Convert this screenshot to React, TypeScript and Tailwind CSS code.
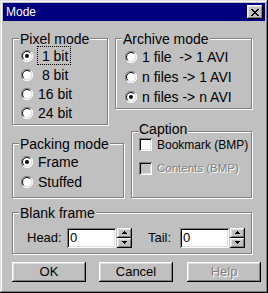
import type { ReactNode } from 'react';

const raised =
  'shadow-[inset_-1px_-1px_0_#000,inset_1px_1px_0_#fff,inset_-2px_-2px_0_#808080,inset_2px_2px_0_#dfdfdf]';
const sunken =
  'shadow-[inset_1px_1px_0_#808080,inset_-1px_-1px_0_#fff,inset_2px_2px_0_#000,inset_-2px_-2px_0_#dfdfdf]';
const disabledText = 'text-[#808080] [text-shadow:1px_1px_0_#fff]';

function Group({
  label,
  className,
  top = 'top-[-7px]',
  children,
}: {
  label: string;
  className: string;
  top?: string;
  children?: ReactNode;
}) {
  return (
    <div className={`relative border border-[#808080] shadow-[inset_1px_1px_0_#fff,1px_1px_0_#fff] ${className}`}>
      <span className={`absolute left-[6px] ${top} bg-[#c0c0c0] px-px text-[14px] leading-[14px] whitespace-pre`}>
        {label}
      </span>
      {children}
    </div>
  );
}

function Radio({ checked }: { checked?: boolean }) {
  return (
    <svg width="12" height="12" viewBox="0 0 12 12" className="shrink-0">
      <circle cx="6" cy="6" r="5" fill="#fff" />
      <path d="M1.9 10.1 A5.5 5.5 0 0 1 10.1 1.9" fill="none" stroke="#808080" />
      <path d="M10.1 1.9 A5.5 5.5 0 0 1 1.9 10.1" fill="none" stroke="#fff" />
      <path d="M2.8 9.2 A4.5 4.5 0 0 1 9.2 2.8" fill="none" stroke="#000" />
      <path d="M9.2 2.8 A4.5 4.5 0 0 1 2.8 9.2" fill="none" stroke="#dfdfdf" />
      {checked && <circle cx="6" cy="6" r="2" fill="#000" />}
    </svg>
  );
}

function RadioRow({ label, checked, focus, h = 'h-[19px]' }: { label: string; checked?: boolean; focus?: boolean; h?: string }) {
  return (
    <div className={`flex items-center ${h}`}>
      <Radio checked={checked} />
      <span
        className={`ml-[4px] flex h-[19px] items-center border pr-[2px] text-[14px] leading-none whitespace-pre ${
          focus ? 'border-dotted border-black' : 'border-transparent'
        }`}
      >
        {label}
      </span>
    </div>
  );
}

function Check({ label, disabled }: { label: string; disabled?: boolean }) {
  return (
    <div className="flex h-[13px] items-center">
      <span className={`h-[13px] w-[13px] shrink-0 ${sunken} ${disabled ? 'bg-[#c0c0c0]' : 'bg-white'}`} />
      <span className={`ml-[5px] whitespace-pre leading-none ${disabled ? `text-[11.5px] ${disabledText}` : 'text-[12px]'}`}>
        {label}
      </span>
    </div>
  );
}

function Arrow({ down }: { down?: boolean }) {
  return (
    <svg width="5" height="3" viewBox="0 0 5 3" className={down ? 'rotate-180' : ''}>
      <rect x="2" y="0" width="1" height="1" fill="#000" />
      <rect x="1" y="1" width="3" height="1" fill="#000" />
      <rect x="0" y="2" width="5" height="1" fill="#000" />
    </svg>
  );
}

function Spin({ label, labelW, ml }: { label: string; labelW: string; ml: string }) {
  return (
    <div className={`flex items-center ${ml}`}>
      <span className={`${labelW} text-[13px] leading-none`}>{label}</span>
      <div className={`flex h-[20px] w-[49px] items-center bg-white pl-[3px] text-[13px] ${sunken}`}>0</div>
      <div className="ml-px flex flex-col">
        <div className={`flex h-[10px] w-[15px] items-center justify-center bg-[#c0c0c0] ${raised}`}>
          <Arrow />
        </div>
        <div className={`flex h-[10px] w-[15px] items-center justify-center bg-[#c0c0c0] ${raised}`}>
          <Arrow down />
        </div>
      </div>
    </div>
  );
}

function Button({ label, disabled, className }: { label: string; disabled?: boolean; className?: string }) {
  return (
    <div
      className={`flex h-[20px] w-[74px] items-center justify-center bg-[#c0c0c0] text-[13px] ${raised} ${
        disabled ? disabledText : ''
      } ${className ?? ''}`}
    >
      {label}
    </div>
  );
}

export default function App() {
  return (
    <div
      className="h-[293px] w-[268px] bg-[#c0c0c0] p-[3px] text-black shadow-[inset_-1px_-1px_0_#000,inset_1px_1px_0_#dfdfdf,inset_-2px_-2px_0_#808080,inset_2px_2px_0_#fff]"
      style={{ fontFamily: '"Liberation Sans", "Noto Sans CJK JP", sans-serif' }}
    >
      <div className="flex h-[18px] items-center justify-between bg-[#000080] pl-[3px] pr-[2px]">
        <span className="text-[12px] leading-none text-white">Mode</span>
        <div className={`flex h-[14px] w-[16px] items-center justify-center bg-[#c0c0c0] ${raised}`}>
          <svg width="8" height="7" viewBox="0 0 8 7">
            <path d="M0 0h2v1h1v1h2V1h1V0h2v1H7v1H6v1H5v1h1v1h1v1h1v1H6V6H5V5H3v1H2v1H0V6h1V5h1V4h1V3H2V2H1V1H0z" fill="#000" />
          </svg>
        </div>
      </div>

      <div className="pl-[9px]">
        <div className="mt-[17px] flex items-start gap-[7px]">
          <Group label="Pixel mode" className="h-[87px] w-[96px] pl-[8px] pt-[7px]">
            <RadioRow label=" 1 bit" checked focus />
            <RadioRow label=" 8 bit" />
            <RadioRow label="16 bit" />
            <RadioRow label="24 bit" />
          </Group>
          <Group label="Archive mode" className="h-[71px] w-[137px] pl-[9px] pt-[8px]">
            <RadioRow label="1 file  -> 1 AVI" h="h-[20px]" />
            <RadioRow label="n files -> 1 AVI" h="h-[20px]" />
            <RadioRow label="n files -> n AVI" h="h-[20px]" checked />
          </Group>
        </div>

        <div className="mt-[6px] flex items-end gap-[7px]">
          <Group label="Packing mode" className="h-[55px] w-[112px] pl-[8px] pt-[8px]">
            <RadioRow label="Frame" checked h="h-[20px]" />
            <RadioRow label="Stuffed" h="h-[20px]" />
          </Group>
          <Group
            label="Caption"
            top="top-[-10px]"
            className="flex h-[67px] w-[121px] flex-col gap-[11px] pl-[7px] pt-[6px]"
          >
            <Check label="Bookmark (BMP)" />
            <Check label="Contents (BMP)" disabled />
          </Group>
        </div>

        <Group label="Blank frame" className="mt-[14px] flex h-[42px] w-[240px] pl-[14px] pt-[9px]">
          <Spin label="Head:" labelW="w-[40px]" ml="" />
          <Spin label="Tail:" labelW="w-[32px]" ml="ml-[16px]" />
        </Group>

        <div className="mt-[8px] flex">
          <Button label="OK" />
          <Button label="Cancel" className="ml-[13px]" />
          <Button label="Help" disabled className="ml-[14px]" />
        </div>
      </div>
    </div>
  );
}
